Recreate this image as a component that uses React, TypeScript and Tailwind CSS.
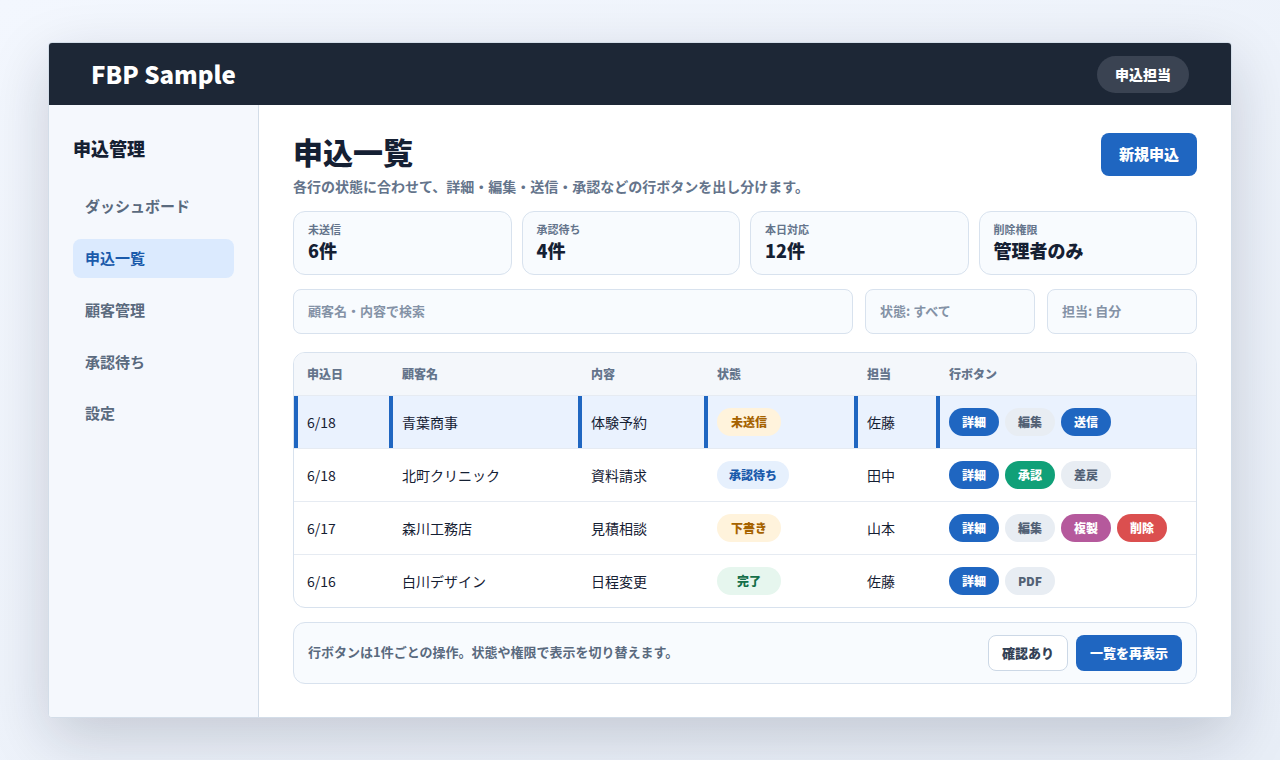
const stats = [
  { label: '未送信', value: '6件' },
  { label: '承認待ち', value: '4件' },
  { label: '本日対応', value: '12件' },
  { label: '削除権限', value: '管理者のみ' },
]

const navItems = ['ダッシュボード', '申込一覧', '顧客管理', '承認待ち', '設定']

const btnStyles = {
  blue: 'bg-[#1f66c1] text-white',
  gray: 'bg-[#e8edf3] text-[#526175]',
  green: 'bg-[#10a078] text-white',
  purple: 'bg-[#b5599c] text-white',
  red: 'bg-[#db4f4f] text-white',
}

const badgeStyles = {
  amber: 'bg-[#fff3dc] text-[#a66300] w-16',
  blue: 'bg-[#e6f0fd] text-[#1a5aab] w-[72px]',
  green: 'bg-[#e6f6ee] text-[#16704a] w-16',
}

type Row = {
  date: string
  customer: string
  content: string
  status: string
  badge: keyof typeof badgeStyles
  owner: string
  actions: [string, keyof typeof btnStyles][]
  active?: boolean
}

const rows: Row[] = [
  {
    date: '6/18',
    customer: '青葉商事',
    content: '体験予約',
    status: '未送信',
    badge: 'amber',
    owner: '佐藤',
    actions: [['詳細', 'blue'], ['編集', 'gray'], ['送信', 'blue']],
    active: true,
  },
  {
    date: '6/18',
    customer: '北町クリニック',
    content: '資料請求',
    status: '承認待ち',
    badge: 'blue',
    owner: '田中',
    actions: [['詳細', 'blue'], ['承認', 'green'], ['差戻', 'gray']],
  },
  {
    date: '6/17',
    customer: '森川工務店',
    content: '見積相談',
    status: '下書き',
    badge: 'amber',
    owner: '山本',
    actions: [['詳細', 'blue'], ['編集', 'gray'], ['複製', 'purple'], ['削除', 'red']],
  },
  {
    date: '6/16',
    customer: '白川デザイン',
    content: '日程変更',
    status: '完了',
    badge: 'green',
    owner: '佐藤',
    actions: [['詳細', 'blue'], ['PDF', 'gray']],
  },
]

const headers = ['申込日', '顧客名', '内容', '状態', '担当', '行ボタン']

export default function App() {
  return (
    <div className="h-[760px] overflow-hidden bg-gradient-to-br from-[#f3f7fe] to-[#e8eef7] pt-[42px] px-[48px] font-['Noto_Sans_CJK_JP',sans-serif]">
      <div className="h-[676px] w-[1184px] flex flex-col overflow-hidden rounded-[4px] border border-[#d3dde8] bg-white shadow-[0_20px_60px_rgba(15,23,42,0.18)]">
        <header className="h-[62px] shrink-0 flex items-center justify-between bg-[#1d2736] pl-[42px] pr-[42px]">
          <div className="text-[24px] font-extrabold leading-none text-white">FBP Sample</div>
          <div className="h-[37px] w-[92px] mt-[1px] flex items-center justify-center rounded-full bg-[#3a4352] text-[14px] font-extrabold text-white">
            申込担当
          </div>
        </header>

        <div className="flex flex-1 min-h-0">
          <aside className="w-[210px] shrink-0 border-r border-[#d3dde8] bg-[#f5f8fd] pl-6 pr-6 pt-[30px]">
            <div className="text-[18px] font-extrabold leading-[26px] text-[#152033]">申込管理</div>
            <nav className="mt-[26px] flex flex-col gap-[12.75px]">
              {navItems.map(item => (
                <div
                  key={item}
                  className={
                    item === '申込一覧'
                      ? 'h-[39px] flex items-center rounded-lg bg-[#dbeafe] px-3 text-[15px] font-bold text-[#1a5aab]'
                      : 'h-[39px] flex items-center rounded-lg px-3 text-[15px] font-bold text-[#5a6a7e]'
                  }
                >
                  {item}
                </div>
              ))}
            </nav>
          </aside>

          <main className="flex-1 min-w-0 pl-[34px] pr-[34px] pt-7">
            <div className="flex items-start justify-between">
              <div>
                <h1 className="text-[30px] font-extrabold leading-9 text-[#152033]">申込一覧</h1>
                <p className="mt-[7px] text-[14px] font-bold leading-5 text-[#64748b]">
                  各行の状態に合わせて、詳細・編集・送信・承認などの行ボタンを出し分けます。
                </p>
              </div>
              <button className="h-[43px] w-24 rounded-lg bg-[#1f66c1] text-[15px] font-extrabold text-white">新規申込</button>
            </div>

            <div className="mt-[15px] grid grid-cols-4 gap-[10px]">
              {stats.map(s => (
                <div key={s.label} className="h-16 rounded-xl border border-[#d8e2ee] bg-[#f8fbfe] pl-[14px] pt-[9px]">
                  <div className="text-[11px] font-bold leading-4 text-[#64748b]">{s.label}</div>
                  <div className="text-[18px] font-extrabold leading-[26px] text-[#152033]">{s.value}</div>
                </div>
              ))}
            </div>

            <div className="mt-[14px] flex gap-3">
              <div className="h-[45px] flex-1 flex items-center rounded-lg border border-[#d8e2ee] bg-[#f8fbfe] pl-[14px] pb-[2px] text-[13px] font-bold text-[#8492a6]">
                顧客名・内容で検索
              </div>
              <div className="h-[45px] w-[170px] flex items-center rounded-lg border border-[#d8e2ee] bg-[#f8fbfe] pl-[14px] pb-[2px] text-[13px] font-bold text-[#8492a6]">
                状態: すべて
              </div>
              <div className="h-[45px] w-[150px] flex items-center rounded-lg border border-[#d8e2ee] bg-[#f8fbfe] pl-[14px] pb-[2px] text-[13px] font-bold text-[#8492a6]">
                担当: 自分
              </div>
            </div>

            <div className="mt-[18px] overflow-hidden rounded-xl border border-[#d8e2ee]">
              <table className="w-full table-fixed border-collapse">
                <colgroup>
                  <col className="w-[95px]" />
                  <col className="w-[189px]" />
                  <col className="w-[126px]" />
                  <col className="w-[150px]" />
                  <col className="w-[82px]" />
                  <col />
                </colgroup>
                <thead>
                  <tr className="h-[42px] border-b border-[#e6ebf2] bg-[#f4f7fb]">
                    {headers.map(h => (
                      <th key={h} className="pl-[13px] text-left text-[12px] font-extrabold text-[#64748b]">
                        {h}
                      </th>
                    ))}
                  </tr>
                </thead>
                <tbody>
                  {rows.map((r, i) => {
                    const cell = r.active
                      ? 'pl-[13px] shadow-[inset_4px_0_0_#1f66c1]'
                      : 'pl-[13px]'
                    const textCell = `${cell} pt-[2px]`
                    return (
                      <tr
                        key={r.customer}
                        className={`h-[53px] text-[14px] text-[#152033] ${i < rows.length - 1 ? 'border-b border-[#e6ebf2]' : ''} ${r.active ? 'bg-[#eaf2fe]' : ''}`}
                      >
                        <td className={textCell}>{r.date}</td>
                        <td className={textCell}>{r.customer}</td>
                        <td className={textCell}>{r.content}</td>
                        <td className={cell}>
                          <span className={`h-7 inline-flex items-center justify-center rounded-full text-[12px] font-extrabold align-middle ${badgeStyles[r.badge]}`}>
                            {r.status}
                          </span>
                        </td>
                        <td className={textCell}>{r.owner}</td>
                        <td className={cell}>
                          <div className="flex gap-[6px]">
                            {r.actions.map(([label, color]) => (
                              <button
                                key={label}
                                className={`h-7 w-[50px] rounded-full text-[12px] font-extrabold ${btnStyles[color]}`}
                              >
                                {label}
                              </button>
                            ))}
                          </div>
                        </td>
                      </tr>
                    )
                  })}
                </tbody>
              </table>
            </div>

            <div className="mt-[14px] h-[62px] flex items-center justify-between rounded-xl border border-[#d8e2ee] bg-[#f8fbfe] pl-[14px] pr-[14px]">
              <div className="pb-[2px] text-[13px] font-bold text-[#5a6a7e]">
                行ボタンは1件ごとの操作。状態や権限で表示を切り替えます。
              </div>
              <div className="flex gap-2">
                <button className="h-9 w-20 rounded-lg border border-[#ccd8e6] bg-white text-[13px] font-extrabold text-[#334155]">確認あり</button>
                <button className="h-9 w-[106px] rounded-lg bg-[#1f66c1] text-[13px] font-extrabold text-white">一覧を再表示</button>
              </div>
            </div>
          </main>
        </div>
      </div>
    </div>
  )
}
